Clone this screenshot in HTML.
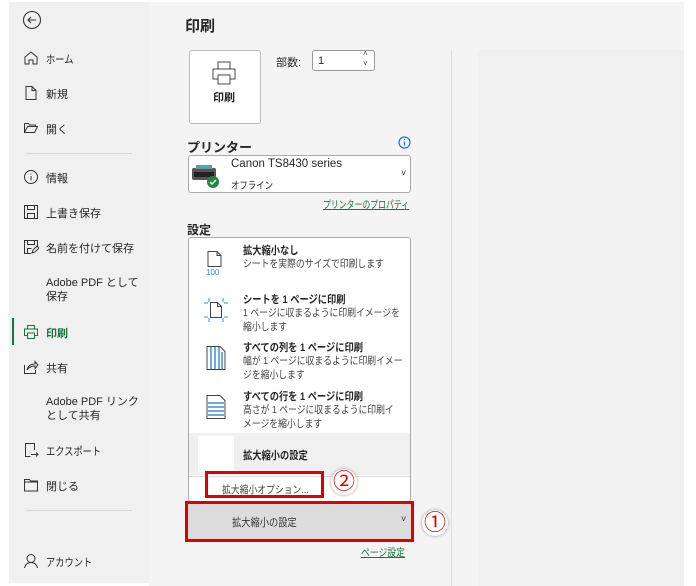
<!DOCTYPE html>
<html><head><meta charset="utf-8"><style>
*{margin:0;padding:0;box-sizing:border-box}
body{width:696px;height:586px;background:#fff;position:relative;overflow:hidden;font-family:"Liberation Sans","Noto Sans CJK JP",sans-serif;color:#262626}
.a{position:absolute;white-space:nowrap}
#side{position:absolute;left:9px;top:2px;width:140px;height:581px;background:#f0f0f0}
#main{position:absolute;left:149px;top:2px;width:535px;height:584px;background:#f4f4f4}
.it{font-size:11px;left:46px}
.ic{left:23px;width:16px;height:16px}
.t{font-size:11px;font-weight:bold}
.d{font-size:10.5px;color:#444;line-height:14px}
.n{transform:scaleX(.84);transform-origin:0 0}
.red{position:absolute;border:3px solid #e00000}
.circ{position:absolute;width:26px;height:26px;border-radius:50%;background:#fff;box-shadow:0 0 3px #999;color:#e00000;font-size:22px;line-height:25px;text-align:center}
</style></head><body>
<div id="side"></div>
<div id="main"></div>
<div class="a" style="left:478px;top:50px;width:206px;height:536px;background:#f0f0f0"></div>
<div class="a" style="left:451px;top:50px;width:1px;height:536px;background:#ddd"></div>

<svg class="a" style="left:22px;top:10px" width="20" height="20" viewBox="0 0 20 20" fill="none" stroke="#333" stroke-width="1.1"><circle cx="10" cy="10" r="8.5"/><path d="M14 10H6M9 7l-3 3 3 3"/></svg>
<svg class="a ic" style="top:50px" viewBox="0 0 16 16" fill="none" stroke="#333"><path d="M2 7L8 2l6 5v7H10V10H6v4H2z"/></svg>
<div class="a it n" style="top:51px">ホーム</div>
<svg class="a ic" style="top:85px" viewBox="0 0 16 16" fill="none" stroke="#333"><path d="M3 1.5h6l4 4v9H3zM9 1.5v4h4"/></svg>
<div class="a it" style="top:86px">新規</div>
<svg class="a ic" style="top:120px" viewBox="0 0 16 16" fill="none" stroke="#333"><path d="M1.5 3.5h4l1 1.5h6v2M1.5 3.5v9h10l3-6H4.5l-3 6"/></svg>
<div class="a it" style="top:121px">開く</div>
<div class="a" style="left:26px;top:153px;width:106px;height:1px;background:#d6d6d6"></div>
<svg class="a ic" style="top:169px" viewBox="0 0 16 16" fill="none" stroke="#333"><circle cx="8" cy="8" r="6.5"/><path d="M8 7v4.5M8 4.5v1"/></svg>
<div class="a it" style="top:170px">情報</div>
<svg class="a ic" style="top:204px" viewBox="0 0 16 16" fill="none" stroke="#333"><path d="M1.5 1.5h13v13h-13zM4.5 1.5v4h7v-4M4.5 14.5v-5h7v5"/></svg>
<div class="a it" style="top:205px">上書き保存</div>
<svg class="a ic" style="top:239px" viewBox="0 0 16 16" fill="none" stroke="#333"><path d="M8 14.5H1.5v-13h13v6M4.5 1.5v4h7v-4M4.5 14.5v-5h4M9 14l1-3 4-4 2 2-4 4z"/></svg>
<div class="a it" style="top:240px">名前を付けて保存</div>
<div class="a it" style="top:276px;line-height:14px">Adobe PDF として<br>保存</div>
<div class="a" style="left:12px;top:318px;width:2px;height:27px;background:#1e7145"></div>
<svg class="a ic" style="top:324px" viewBox="0 0 16 16" fill="none" stroke="#1e7145"><path d="M4.5 5V1.5h7V5M4.5 11.5h-3V5h13v6.5h-3M4.5 9h7v5.5h-7z"/></svg>
<div class="a it" style="top:325px;color:#1e7145;font-weight:bold">印刷</div>
<svg class="a ic" style="top:359px" viewBox="0 0 16 16" fill="none" stroke="#333"><path d="M1.5 6v8.5h11V11M4 11c1-4 4-6 8-6V2.5l3 3.5-3 3.5V7c-3 0-6 1-8 4"/></svg>
<div class="a it" style="top:360px">共有</div>
<div class="a it" style="top:395px;line-height:14px">Adobe PDF リンク<br>として共有</div>
<svg class="a ic" style="top:442px" viewBox="0 0 16 16" fill="none" stroke="#333"><path d="M11.5 8V1.5h-9v13h5M8 12.5h7M13 10.5l2 2-2 2"/></svg>
<div class="a it n" style="top:443px">エクスポート</div>
<svg class="a ic" style="top:477px" viewBox="0 0 16 16" fill="none" stroke="#333"><path d="M1.5 2.5h5l1 1.5h7v10h-13zM1.5 5h13"/></svg>
<div class="a it" style="top:478px">閉じる</div>
<div class="a" style="left:26px;top:510px;width:106px;height:1px;background:#d6d6d6"></div>
<svg class="a ic" style="top:553px" viewBox="0 0 16 16" fill="none" stroke="#333"><circle cx="8" cy="5.5" r="4"/><path d="M1.5 15c1-4 3.5-5.5 6.5-5.5s5.5 1.5 6.5 5.5"/></svg>
<div class="a it n" style="top:554px">アカウント</div>

<div class="a" style="left:185px;top:15px;font-size:15px;font-weight:bold">印刷</div>
<div class="a" style="left:189px;top:50px;width:72px;height:74px;background:#fff;border:1px solid #bbb;border-radius:3px"></div>
<svg class="a" style="left:211px;top:60px" width="26" height="26" viewBox="0 0 26 26" fill="none" stroke="#444"><path d="M7 9V2h12v7M7 19H2V9h22v10h-5M7 15h12v9H7z"/></svg>
<div class="a" style="left:213px;top:89px;font-size:11px;font-weight:bold">印刷</div>
<div class="a" style="left:276px;top:54px;font-size:11px">部数:</div>
<div class="a" style="left:312px;top:50px;width:63px;height:21px;background:#fff;border:1px solid #999;border-radius:3px;font-size:11px;padding:4px 5px">1</div>
<div class="a" style="left:363px;top:49px;font-size:8px;line-height:10px;color:#444">˄<br>˅</div>
<div class="a" style="left:187px;top:137px;font-size:13px;font-weight:bold">プリンター</div>
<svg class="a" style="left:398px;top:136px" width="13" height="13" viewBox="0 0 13 13" fill="none" stroke="#1a73c8" stroke-width="1.2"><circle cx="6.5" cy="6.5" r="5.5"/><path d="M6.5 5.5v4M6.5 3v1"/></svg>
<div class="a" style="left:188px;top:155px;width:223px;height:38px;background:#fff;border:1px solid #aaa;border-radius:3px"></div>
<svg class="a" style="left:191px;top:163px" width="30" height="26" viewBox="0 0 30 26"><rect x="1" y="5" width="24" height="12" rx="2" fill="#555"/><rect x="5" y="2" width="16" height="4" fill="#888"/><rect x="9" y="3" width="9" height="1" fill="#3cc"/><rect x="3" y="9" width="20" height="5" fill="#222"/><circle cx="22" cy="19" r="6" fill="#1a8a3c"/><path d="M19 19l2 2 4-4" stroke="#fff" stroke-width="1.5" fill="none"/></svg>
<div class="a" style="left:231px;top:158px;font-size:11.5px">Canon TS8430 series</div>
<div class="a n" style="left:231px;top:177px;font-size:10px">オフライン</div>
<div class="a" style="left:401px;top:168px;font-size:9px">˅</div>
<div class="a" style="left:323px;top:197px;font-size:10.5px;color:#1e7145;text-decoration:underline;transform:scaleX(.75);transform-origin:0 0">プリンターのプロパティ</div>
<div class="a" style="left:187px;top:221px;font-size:12px;font-weight:bold">設定</div>

<div class="a" style="left:188px;top:237px;width:223px;height:265px;background:#fff;border:1px solid #aaa;border-radius:3px"></div>
<svg class="a" style="left:205px;top:250px" width="20" height="26" viewBox="0 0 20 26" fill="none" stroke="#444"><path d="M3 1.5h9l4 4v11H3zM12 1.5v4h4"/><text x="1" y="25" font-size="8" fill="#3a8fd6" stroke="none" font-family="Liberation Sans">100</text></svg>
<div class="a t n" style="left:243px;top:242px">拡大縮小なし</div>
<div class="a d n" style="left:243px;top:257px">シートを実際のサイズで印刷します</div>
<svg class="a" style="left:204px;top:298px" width="24" height="24" viewBox="0 0 24 24" fill="none" stroke="#3a8fd6"><path d="M5 0v4M0 5h4M19 0v4M20 5h4M5 20v4M0 19h4M19 20v4M20 19h4"/><path d="M6.5 4.5h7l4 4v11h-11zM13.5 4.5v4h4" stroke="#444"/></svg>
<div class="a t n" style="left:243px;top:291px">シートを 1 ページに印刷</div>
<div class="a d n" style="left:243px;top:306px">1 ページに収まるように印刷イメージを<br>縮小します</div>
<svg class="a" style="left:205px;top:345px" width="22" height="26" viewBox="0 0 22 26" fill="none"><path d="M2 1.5h13l5 5v18H2z" stroke="#444"/><path d="M6 2v22M10 2v22M14 2v22M17 7v17" stroke="#3a8fd6" stroke-width="1.5"/></svg>
<div class="a t n" style="left:243px;top:339px">すべての列を 1 ページに印刷</div>
<div class="a d n" style="left:243px;top:354px">幅が 1 ページに収まるように印刷イメー<br>ジを縮小します</div>
<svg class="a" style="left:205px;top:394px" width="22" height="26" viewBox="0 0 22 26" fill="none"><path d="M2 1.5h13l5 5v18H2z" stroke="#444"/><path d="M3 9h16M3 13h16M3 17h16M3 21h16" stroke="#3a8fd6" stroke-width="1.5"/></svg>
<div class="a t n" style="left:243px;top:388px">すべての行を 1 ページに印刷</div>
<div class="a d n" style="left:243px;top:403px">高さが 1 ページに収まるように印刷イ<br>メージを縮小します</div>
<div class="a" style="left:189px;top:433px;width:221px;height:42px;background:#f0f0f0"></div>
<div class="a" style="left:198px;top:436px;width:36px;height:36px;background:#fff"></div>
<div class="a t n" style="left:243px;top:447px">拡大縮小の設定</div>
<div class="a" style="left:189px;top:476px;width:221px;height:1px;background:#ddd"></div>
<div class="a n" style="left:222px;top:482px;font-size:10.5px;color:#444">拡大縮小オプション...</div>
<div class="red" style="left:205px;top:471px;width:119px;height:27px"></div>
<div class="circ" style="left:331px;top:469px">②</div>

<div class="a" style="left:188px;top:503px;width:223px;height:37px;background:#dcdcdc"></div>
<div class="a n" style="left:232px;top:514px;font-size:11px;color:#333">拡大縮小の設定</div>
<div class="a" style="left:401px;top:514px;font-size:9px">˅</div>
<div class="red" style="left:185px;top:501px;width:229px;height:41px"></div>
<div class="circ" style="left:422px;top:510px">①</div>
<div class="a n" style="left:361px;top:545px;font-size:10.5px;color:#1e7145;text-decoration:underline">ページ設定</div>
</body></html>
